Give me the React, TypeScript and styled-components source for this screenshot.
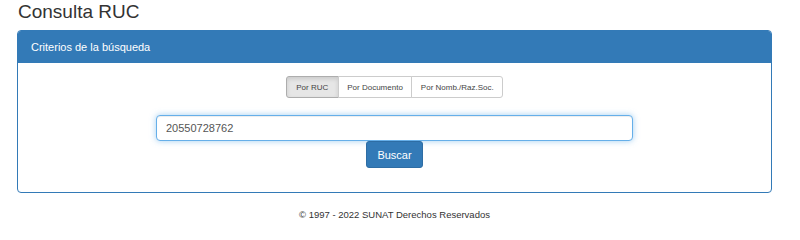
import styled, { createGlobalStyle, css } from "styled-components";

const GlobalStyle = createGlobalStyle`
  body {
    margin: 0;
    background: #fff;
    font-family: "Liberation Sans", Arial, sans-serif;
    color: #333;
  }
  * { box-sizing: border-box; }
`;

const Page = styled.div`
  padding: 0 28px 0 17px;
`;

const Title = styled.h1`
  margin: 0 0 6px 1px;
  font-size: 19px;
  font-weight: 400;
  line-height: 24px;
  color: #333;
`;

const Panel = styled.div`
  border: 1px solid #337ab7;
  border-radius: 4px;
  background: #fff;
`;

const PanelHeading = styled.div`
  height: 32px;
  padding: 0 13px;
  display: flex;
  align-items: center;
  background: #337ab7;
  color: #fff;
  font-size: 11px;
  border-radius: 3px 3px 0 0;
`;

const PanelBody = styled.div`
  padding: 13px 0 24px;
  display: flex;
  flex-direction: column;
  align-items: center;
`;

const Tabs = styled.div`
  display: flex;
  margin-bottom: 17px;
`;

const Tab = styled.button<{ active?: boolean }>`
  height: 22px;
  padding: 0 8.5px;
  margin-left: -1px;
  border: 1px solid #ccc;
  background: #fff;
  color: #444;
  font-family: inherit;
  font-size: 8px;
  cursor: pointer;
  &:first-child {
    margin-left: 0;
    border-radius: 3px 0 0 3px;
  }
  &:last-child {
    border-radius: 0 3px 3px 0;
  }
  ${(p) =>
    p.active &&
    css`
      background: #e6e6e6;
      border-color: #adadad;
      box-shadow: inset 0 2px 4px rgba(0, 0, 0, 0.125);
      padding: 0 9.5px;
    `}
`;

const SearchInput = styled.input`
  width: 477px;
  height: 26px;
  padding: 0 9px;
  border: 1px solid #66afe9;
  border-radius: 4px;
  outline: none;
  font-family: inherit;
  font-size: 11px;
  color: #555;
  box-shadow: inset 0 1px 1px rgba(0, 0, 0, 0.075),
    0 0 6px rgba(102, 175, 233, 0.6);
`;

const SearchButton = styled.button`
  height: 27px;
  padding: 0 10px;
  border: 1px solid #2e6da4;
  border-radius: 3px;
  background: #337ab7;
  color: #fff;
  font-family: inherit;
  font-size: 11px;
  cursor: pointer;
`;

const Footer = styled.div`
  margin-top: 16px;
  text-align: center;
  font-size: 9.5px;
  line-height: 12px;
  color: #333;
`;

export default function App() {
  return (
    <Page>
      <GlobalStyle />
      <Title>Consulta RUC</Title>
      <Panel>
        <PanelHeading>Criterios de la búsqueda</PanelHeading>
        <PanelBody>
          <Tabs>
            <Tab active>Por RUC</Tab>
            <Tab>Por Documento</Tab>
            <Tab>Por Nomb./Raz.Soc.</Tab>
          </Tabs>
          <SearchInput defaultValue="20550728762" />
          <SearchButton>Buscar</SearchButton>
        </PanelBody>
      </Panel>
      <Footer>© 1997 - 2022 SUNAT Derechos Reservados</Footer>
    </Page>
  );
}
